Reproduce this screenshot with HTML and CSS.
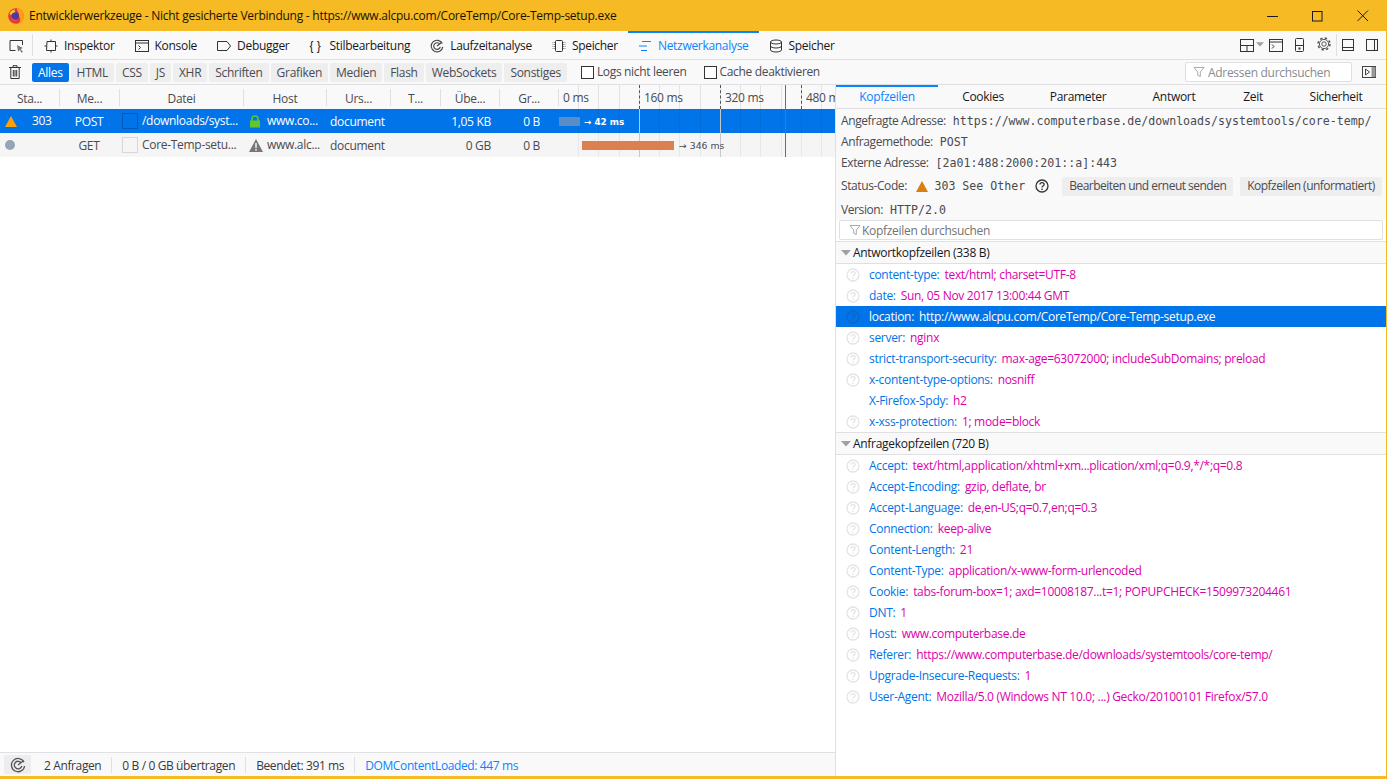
FILE: index.html
```html
<!DOCTYPE html>
<html lang="de">
<head>
<meta charset="utf-8">
<title>Entwicklerwerkzeuge</title>
<link rel="stylesheet" href="styles.css">
</head>
<body>
<svg class="defs" width="0" height="0">
  <symbol id="i-q" viewBox="0 0 14 14"><circle cx="7" cy="7" r="6" fill="none" stroke="currentColor" stroke-width="1.3"/><path d="M5 5.5C5 4.2 6 3.6 7 3.6S9.1 4.3 9.1 5.5C9.1 7 7 7 7 8.6" fill="none" stroke="currentColor" stroke-width="1.3"/><rect x="6.3" y="9.6" width="1.4" height="1.4" fill="currentColor"/></symbol>
  <symbol id="i-filter" viewBox="0 0 12 12"><path d="M1 1.5h10L7.3 6v4.5L4.7 9.3V6z" fill="none" stroke="#aaa" stroke-width="1"/></symbol>
  <symbol id="i-tri" viewBox="0 0 12 7"><path d="M0 0h12L6 6.5z" fill="#a0a0a0"/></symbol>
  <symbol id="i-perf" viewBox="0 0 16 16"><path d="M14 5.2A6.6 6.6 0 1 0 14.6 9M11.3 6A3.8 3.8 0 1 0 11.8 9M8 8l5.8-4.6" fill="none" stroke="currentColor" stroke-width="1.3"/></symbol>
</svg>
<div class="window">
  <header class="titlebar">
    <svg class="fx" width="16" height="16" viewBox="0 0 16 16"><circle cx="8" cy="8" r="7.800" fill="#e5333f"/><path d="M9 .3A7.800 7.800 0 0 1 15.300 11C14.500 13.500 12 15 10 15.500 12.500 13.500 13 10.500 11 8.500 10 6 11 4 9.500 3 9 2 8.800 1 9 .3z" fill="#ff9c1e"/><circle cx="7.300" cy="7.800" r="3.700" fill="#4b3aa6"/><path d="M1.500 5.500C2.500 3 5 1.500 7 1.500c-.6 1-.4 2 .5 2.700C5.500 4.300 3.500 5.500 3 7.500 2.500 7 2 6 1.500 5.500z" fill="#ffc22e"/><path d="M3.500 9.500c1 2.300 4 3.300 6.300 2-1 2-4.300 2.500-6 .5-.6-.7-.5-1.700-.3-2.500z" fill="#f5542b"/></svg>
    <span class="title">Entwicklerwerkzeuge - Nicht gesicherte Verbindung - https://www.alcpu.com/CoreTemp/Core-Temp-setup.exe</span>
    <div class="winbtns">
      <svg width="12" height="12" viewBox="0 0 12 12"><path d="M0 6.500h11" stroke="#1a1a1a" fill="none"/></svg>
      <svg width="12" height="12" viewBox="0 0 12 12"><rect x=".5" y="1.500" width="9.500" height="9.500" stroke="#1a1a1a" fill="none"/></svg>
      <svg width="12" height="12" viewBox="0 0 12 12"><path d="M.5 .5l10.500 10.500M11 .5L.5 11" stroke="#1a1a1a" fill="none"/></svg>
    </div>
  </header>

  <nav class="tabs">
    <div class="pick">
      <svg width="16" height="14" viewBox="0 0 16 14"><path d="M13.500 6V1.500H1V11.500H6.500" fill="none" stroke="#333"/><path d="M8 6l6 3-2.500 1L14 13l-1.500.8L10.800 11 9 12.500z" fill="#777"/></svg>
    </div>
    <a class="tab"><svg width="14" height="14" viewBox="0 0 14 14"><path d="M3 2.500h8.500v9H2.500z" fill="none" stroke="#333"/><path d="M7 .5v2M7 11.500v2M.5 7h2M11.500 7h2" stroke="#333"/></svg>Inspektor</a>
    <a class="tab"><svg width="14" height="14" viewBox="0 0 14 14"><rect x=".5" y="1.500" width="13" height="11" fill="none" stroke="#333"/><path d="M.5 4h13M3.500 6.500l2 2-2 2" fill="none" stroke="#333"/></svg>Konsole</a>
    <a class="tab"><svg width="14" height="14" viewBox="0 0 14 14"><path d="M.5 2.500h9.500l3.500 4.500-3.500 4.500H.5z" fill="none" stroke="#333" stroke-linejoin="round"/></svg>Debugger</a>
    <a class="tab"><span class="braces">{ }</span>Stilbearbeitung</a>
    <a class="tab"><svg class="dark" width="14" height="14"><use href="#i-perf"/></svg>Laufzeitanalyse</a>
    <a class="tab"><svg width="14" height="14" viewBox="0 0 14 14"><rect x="3.500" y="1.500" width="7" height="11" rx="1" fill="none" stroke="#333"/><path d="M1 3v8M2.500 3v8M11.500 3v8M13 3v8" stroke="#888" stroke-dasharray="1 1"/></svg>Speicher</a>
    <a class="tab active"><svg width="14" height="14" viewBox="0 0 14 14"><path d="M4 2.500h9M1 7h8M3 11.500h6" stroke="#0a84ff" fill="none"/></svg>Netzwerkanalyse</a>
    <a class="tab"><svg width="14" height="14" viewBox="0 0 14 14"><ellipse cx="7" cy="3" rx="5.500" ry="2" fill="none" stroke="#333"/><path d="M1.500 3v8c0 1 2.500 2 5.500 2s5.500-1 5.500-2V3M1.500 7c0 1 2.500 2 5.500 2s5.500-1 5.500-2" fill="none" stroke="#333"/></svg>Speicher</a>
    <div class="tabtools">
      <svg width="14" height="13" viewBox="0 0 14 13"><rect x=".5" y=".5" width="13" height="12" fill="none" stroke="#333"/><path d="M.5 6.500h13M7 6.500v6" stroke="#333"/></svg>
      <svg class="caret" width="8" height="5"><use href="#i-tri"/></svg>
      <svg class="t2" width="14" height="13" viewBox="0 0 14 13"><rect x=".5" y=".5" width="13" height="12" fill="none" stroke="#333"/><path d="M.5 3h13M3 5.500l2 2-2 2" fill="none" stroke="#333"/></svg>
      <svg class="t3" width="9" height="14" viewBox="0 0 9 14"><rect x=".5" y=".5" width="8" height="13" rx="1" fill="none" stroke="#333"/><path d="M.5 7.500h8"  stroke="#333"/><rect x="3.500" y="9.500" width="2" height="2" fill="#333"/></svg>
      <svg class="t4" width="14" height="14" viewBox="0 0 14 14"><circle cx="7" cy="7" r="2.200" fill="none" stroke="#555"/><circle cx="7" cy="7" r="4.600" fill="none" stroke="#555"/><circle cx="7" cy="7" r="6" fill="none" stroke="#555" stroke-width="1.500" stroke-dasharray="2.400 2.310"/></svg>
      <span class="vsep"></span>
      <svg width="12" height="12" viewBox="0 0 12 12"><rect x=".5" y=".5" width="11" height="11" fill="none" stroke="#333"/><path d="M.5 8.500h11" stroke="#333"/></svg>
      <svg class="t6" width="12" height="12" viewBox="0 0 12 12"><rect x=".5" y=".5" width="11" height="11" fill="none" stroke="#333"/><path d="M8.500 .5v11" stroke="#333"/></svg>
    </div>
  </nav>

  <div class="netbar">
    <svg class="trash" width="12" height="14" viewBox="0 0 12 14"><path d="M0 2.500h12M4 2.500V.7h4v1.800M1.800 2.500v11h8.400v-11M4.300 5v6.500M6 5v6.500M7.700 5v6.500" fill="none" stroke="#333"/></svg>
    <div class="filters">
      <button class="fbtn on">Alles</button>
      <button class="fbtn">HTML</button>
      <button class="fbtn">CSS</button>
      <button class="fbtn">JS</button>
      <button class="fbtn">XHR</button>
      <button class="fbtn">Schriften</button>
      <button class="fbtn">Grafiken</button>
      <button class="fbtn">Medien</button>
      <button class="fbtn">Flash</button>
      <button class="fbtn">WebSockets</button>
      <button class="fbtn">Sonstiges</button>
    </div>
    <label class="chk"><i></i>Logs nicht leeren</label>
    <label class="chk"><i></i>Cache deaktivieren</label>
    <div class="search"><svg width="12" height="12"><use href="#i-filter"/></svg><span class="search-text">Adressen durchsuchen</span></div>
    <svg class="sidebar-toggle" width="14" height="12" viewBox="0 0 14 12"><rect x=".5" y=".5" width="13" height="11" fill="none" stroke="#444"/><rect x="9.500" y="1" width="4" height="10" fill="#999"/><path d="M3.500 3v6l4-3z" fill="none" stroke="#444"/></svg>
  </div>

  <main class="panes">
    <section class="left">
      <div class="table">
        <div class="row head">
          <span class="c">Sta...</span><span class="c">Me...</span><span class="c">Datei</span><span class="c">Host</span><span class="c">Urs...</span><span class="c">T...</span><span class="c">Übe...</span><span class="c">Gr...</span>
          <span class="wf wfhead"><b>0 ms</b><b>160 ms</b><b>320 ms</b><b>480 ms</b></span>
        </div>
        <div class="row sel">
          <span class="d st"><svg width="12" height="11" viewBox="0 0 12 11"><path d="M6 0l6 11H0z" fill="#ff9f0a"/></svg><em>303</em></span>
          <span class="d ctr">POST</span>
          <span class="d file"><i class="thumb"></i>/downloads/syst...</span>
          <span class="d host"><svg width="12" height="13" viewBox="0 0 12 13"><path d="M3 6V4a3 3 0 0 1 6 0v2" fill="none" stroke="#62c52e" stroke-width="1.600"/><rect x="1" y="5.500" width="10" height="7" fill="#62c52e"/></svg>www.co...</span>
          <span class="d">document</span><span class="d"></span>
          <span class="d rt">1,05 KB</span><span class="d rt r2">0 B</span>
          <span class="wf"><i class="bar b1"></i><small class="lab l1">→ 42 ms</small></span>
        </div>
        <div class="row alt">
          <span class="d st"><i class="dot"></i></span>
          <span class="d ctr">GET</span>
          <span class="d file"><i class="thumb"></i>Core-Temp-setu...</span>
          <span class="d host"><svg class="warn" width="14" height="13" viewBox="0 0 14 13"><path d="M7 0l7 13H0z" fill="#777"/><path d="M6.300 4h1.400v5H6.300zM6.300 10h1.400v1.500H6.300z" fill="#fff"/></svg>www.alc...</span>
          <span class="d">document</span><span class="d"></span>
          <span class="d rt">0 GB</span><span class="d rt r2">0 B</span>
          <span class="wf"><i class="bar b2"></i><small class="lab l2">→ 346 ms</small></span>
        </div>
      </div>
      <footer class="status">
        <span class="perfbtn"><svg width="16" height="16"><use href="#i-perf"/></svg></span>
        <span class="si">2 Anfragen</span>
        <span class="si">0 B / 0 GB übertragen</span>
        <span class="si">Beendet: 391 ms</span>
        <span class="si blue">DOMContentLoaded: 447 ms</span>
      </footer>
    </section>

    <aside class="right">
      <div class="dtabs">
        <a class="dtab on">Kopfzeilen</a><a class="dtab">Cookies</a><a class="dtab">Parameter</a><a class="dtab">Antwort</a><a class="dtab">Zeit</a><a class="dtab">Sicherheit</a>
      </div>
      <div class="summary">
        <div class="sline"><span>Angefragte Adresse:</span><code>https://www.computerbase.de/downloads/systemtools/core-temp/</code></div>
        <div class="sline"><span>Anfragemethode:</span><code>POST</code></div>
        <div class="sline"><span>Externe Adresse:</span><code>[2a01:488:2000:201::a]:443</code></div>
        <div class="sline status-line"><span>Status-Code:</span>
          <svg width="12" height="11" viewBox="0 0 12 11"><path d="M6 0l6 11H0z" fill="#d97e0f"/></svg>
          <code>303 See Other</code>
          <svg class="help" width="14" height="14"><use href="#i-q"/></svg>
          <button class="gbtn g1">Bearbeiten und erneut senden</button><button class="gbtn">Kopfzeilen (unformatiert)</button>
        </div>
        <div class="sline"><span>Version:</span><code>HTTP/2.0</code></div>
      </div>
      <div class="hfilter"><svg width="12" height="12"><use href="#i-filter"/></svg>Kopfzeilen durchsuchen</div>

      <div class="section"><svg width="10" height="6"><use href="#i-tri"/></svg>Antwortkopfzeilen (338 B)</div>
      <ul class="hlist">
        <li><svg class="q" width="14" height="14"><use href="#i-q"/></svg><b>content-type:</b><s>text/html; charset=UTF-8</s></li>
        <li><svg class="q" width="14" height="14"><use href="#i-q"/></svg><b>date:</b><s>Sun, 05 Nov 2017 13:00:44 GMT</s></li>
        <li class="hsel"><svg class="q" width="14" height="14"><use href="#i-q"/></svg><b>location:</b><s>http://www.alcpu.com/CoreTemp/Core-Temp-setup.exe</s></li>
        <li><svg class="q" width="14" height="14"><use href="#i-q"/></svg><b>server:</b><s>nginx</s></li>
        <li><svg class="q" width="14" height="14"><use href="#i-q"/></svg><b>strict-transport-security:</b><s>max-age=63072000; includeSubDomains; preload</s></li>
        <li><svg class="q" width="14" height="14"><use href="#i-q"/></svg><b>x-content-type-options:</b><s>nosniff</s></li>
        <li><span class="q"></span><b>X-Firefox-Spdy:</b><s>h2</s></li>
        <li><svg class="q" width="14" height="14"><use href="#i-q"/></svg><b>x-xss-protection:</b><s>1; mode=block</s></li>
      </ul>
      <div class="section"><svg width="10" height="6"><use href="#i-tri"/></svg>Anfragekopfzeilen (720 B)</div>
      <ul class="hlist">
        <li><svg class="q" width="14" height="14"><use href="#i-q"/></svg><b>Accept:</b><s>text/html,application/xhtml+xm...plication/xml;q=0.9,*/*;q=0.8</s></li>
        <li><svg class="q" width="14" height="14"><use href="#i-q"/></svg><b>Accept-Encoding:</b><s>gzip, deflate, br</s></li>
        <li><svg class="q" width="14" height="14"><use href="#i-q"/></svg><b>Accept-Language:</b><s>de,en-US;q=0.7,en;q=0.3</s></li>
        <li><svg class="q" width="14" height="14"><use href="#i-q"/></svg><b>Connection:</b><s>keep-alive</s></li>
        <li><svg class="q" width="14" height="14"><use href="#i-q"/></svg><b>Content-Length:</b><s>21</s></li>
        <li><svg class="q" width="14" height="14"><use href="#i-q"/></svg><b>Content-Type:</b><s>application/x-www-form-urlencoded</s></li>
        <li><svg class="q" width="14" height="14"><use href="#i-q"/></svg><b>Cookie:</b><s>tabs-forum-box=1; axd=10008187...t=1; POPUPCHECK=1509973204461</s></li>
        <li><svg class="q" width="14" height="14"><use href="#i-q"/></svg><b>DNT:</b><s>1</s></li>
        <li><svg class="q" width="14" height="14"><use href="#i-q"/></svg><b>Host:</b><s>www.computerbase.de</s></li>
        <li><svg class="q" width="14" height="14"><use href="#i-q"/></svg><b>Referer:</b><s>https://www.computerbase.de/downloads/systemtools/core-temp/</s></li>
        <li><svg class="q" width="14" height="14"><use href="#i-q"/></svg><b>Upgrade-Insecure-Requests:</b><s>1</s></li>
        <li><svg class="q" width="14" height="14"><use href="#i-q"/></svg><b>User-Agent:</b><s>Mozilla/5.0 (Windows NT 10.0; ...) Gecko/20100101 Firefox/57.0</s></li>
      </ul>
    </aside>
  </main>
</div>
</body>
</html>
```

FILE: styles.css
```css
* { box-sizing: border-box; }
html, body { margin: 0; height: 100%; overflow: hidden; background: #fff; }
body { font: 12px/16px "Open Sans", "Noto Sans", sans-serif; letter-spacing: -0.3px; color: #38383d; }
.defs { position: absolute; }
svg { display: block; flex: none; }

.window { height: 779px; display: flex; flex-direction: column; border-right: 1px solid #f6bb24; border-bottom: 3px solid #f6bb24; }

.titlebar { height: 31px; flex: none; background: #f6bb24; display: flex; align-items: center; padding-left: 8px; color: #1a1200; margin-right: -1px; }
.title { margin-left: 5px; letter-spacing: -0.25px; }
.winbtns { margin-left: auto; display: flex; gap: 33px; margin-right: 18px; }

.tabs { height: 29px; flex: none; background: #f9f9fa; border-bottom: 1px solid #e0e0e2; display: flex; align-items: stretch; }
.pick { width: 33px; padding: 5px 0 0 9px; margin: 3px 1px 0 0; border-right: 1px solid #e0e0e2; height: 22px; }
.tab { display: flex; align-items: center; gap: 6px; padding: 0 10px; border-top: 2px solid transparent; color: #18181a; white-space: nowrap; }
.tab.active { border-top-color: #0a84ff; color: #0a84ff; }
.braces { width: 14px; font: 12px/14px "Liberation Sans", sans-serif; white-space: pre; letter-spacing: 0; }
.dark { color: #444; }
.tabtools { margin-left: auto; display: flex; align-items: center; padding-right: 8px; }
.caret { margin: 0 0 2px 2px; }
.t2 { margin-left: 5px; }
.t3 { margin-left: 12px; }
.t4 { margin: 0 0 3px 13px; }
.vsep { width: 1px; height: 22px; background: #e0e0e2; margin: 0 5px; }
.t6 { margin-left: 12px; }

.netbar { height: 25px; flex: none; background: #f9f9fa; border-bottom: 1px solid #e0e0e2; display: flex; align-items: center; }
.trash { margin-left: 9px; }
.filters { display: flex; gap: 2px; margin-left: 11px; }
.fbtn { font: inherit; letter-spacing: inherit; height: 19px; padding: 1px 6px 0; border: 0; border-radius: 2px; background: #eeeeef; color: #4a4a4f; }
.fbtn.on { background: #0074e8; color: #fff; }
.chk { display: flex; align-items: center; gap: 3px; color: #4a4a4f; margin-left: 14px; line-height: 18px; white-space: nowrap; letter-spacing: -0.33px; }
.chk + .chk { margin-left: 17px; }
.chk i { width: 13px; height: 13px; background: #fff; border: 1px solid #333; }
.search { margin-left: auto; width: 167px; height: 20px; background: #fff; border: 1px solid #e0e0e2; border-radius: 2px; display: flex; align-items: center; gap: 3px; padding-left: 7px; color: #8a8a8f; white-space: nowrap; }
.search-text { padding-top: 2px; }
.sidebar-toggle { margin: 0 10px; }

.panes { flex: 1; min-height: 0; display: flex; }
.left { width: 835px; flex: none; display: flex; flex-direction: column; }
.table { flex: 1; }
.row { height: 24px; display: grid; grid-template-columns: 60px 60px 124px 83px 64px 50px 59px 59px 1fr; align-items: center; }
.head { background: #f9f9fa; color: #4a4a4f; }
.c { text-align: center; height: 17px; line-height: 19px; border-right: 1px solid #e0e0e2; }
.d { padding-left: 3px; white-space: nowrap; height: 24px; line-height: 26px; overflow: hidden; }
.sel { background: #0074e8; color: #fff; }
.alt { background: #f5f5f5; color: #4a4a4f; }
.st { display: flex; align-items: center; padding-left: 5px; }
.st em { font-style: normal; margin-left: 15px; }
.dot { width: 10px; height: 10px; border-radius: 50%; background: #96a4b8; }
.ctr { text-align: center; padding: 0 2px 0 0; }
.file { display: flex; align-items: center; gap: 4px; padding-left: 2px; }
.thumb { width: 16px; height: 16px; flex: none; border: 1px solid #d7d7db; }
.sel .thumb { border-color: #005bb8; }
.host { display: flex; align-items: center; gap: 6px; padding-left: 5px; }
.warn { margin-right: -2px; }
.rt { text-align: right; padding: 0 9px 0 0; }
.r2 { padding: 0; margin-right: 19px; }

.wf { position: relative; align-self: stretch; height: 24px; overflow: hidden;
  background:
    linear-gradient(#0a84ff, #0a84ff) 226px 0 / 1px 100% no-repeat,
    linear-gradient(#c8c8cc, #c8c8cc) 80px 0 / 1px 100% no-repeat,
    linear-gradient(#c8c8cc, #c8c8cc) 161px 0 / 1px 100% no-repeat,
    repeating-linear-gradient(90deg, transparent 0 19.25px, rgba(0, 0, 0, .06) 19.25px 20.25px);
}
.wfhead { display: block; background:
    linear-gradient(#0a84ff, #0a84ff) 226px 0 / 1px 100% no-repeat,
    repeating-linear-gradient(90deg, transparent 0 19.25px, rgba(0, 0, 0, .09) 19.25px 20.25px); }
.wfhead b { position: absolute; top: 5px; font-weight: 400; white-space: nowrap; color: #4a4a4f; }
.wfhead b:nth-child(1) { left: 4px; }
.wfhead b:nth-child(2) { left: 85px; }
.wfhead b:nth-child(3) { left: 166px; }
.wfhead b:nth-child(4) { left: 247px; }
.wfhead b:nth-child(n+2)::before { content: ""; position: absolute; left: -5px; top: -5px; height: 24px; border-left: 1px dashed #555; }
.bar { position: absolute; height: 9px; top: 8px; }
.b1 { left: 0; width: 21px; background: #5a8cc7; }
.b2 { left: 23px; width: 92px; background: #dd8050; }
.lab { position: absolute; top: 5px; font: 9.300px/16px "DejaVu Sans", sans-serif; letter-spacing: 0; white-space: nowrap; }
.l1 { left: 25px; font-weight: 700; font-size: 8.800px; }
.l2 { left: 120px; }

.status { height: 24px; flex: none; background: #f9f9fa; border-top: 1px solid #e0e0e2; display: flex; align-items: center; padding-left: 4px; }
.perfbtn { width: 27px; height: 19px; background: #ededf0; border-radius: 2px; display: flex; align-items: center; justify-content: center; color: #555; margin-right: 3px; }
.si { padding: 0 10px; height: 16px; line-height: 18px; border-right: 1px solid #e0e0e2; white-space: nowrap; letter-spacing: -0.38px; }
.si.blue { border: 0; color: #0a84ff; }

.right { flex: 1; min-width: 0; border-left: 1px solid #e0e0e2; background: #fff; display: flex; flex-direction: column; }
.dtabs { height: 24px; flex: none; background: #f9f9fa; border-bottom: 1px solid #e0e0e2; display: grid; grid-template-columns: 102px 90px 100px 92px 66px 1fr; color: #18181a; }
.dtab { text-align: center; line-height: 20px; border-top: 2px solid transparent; }
.dtab.on { border-top-color: #0a84ff; color: #0a84ff; }
.summary { background: #f9f9fa; padding: 1px 0 0 5px; }
.sline { height: 21px; display: flex; align-items: center; gap: 7px; color: #4a4a4f; white-space: nowrap; letter-spacing: -0.4px; }
code { font: 11.600px/16px "DejaVu Sans Mono", monospace; letter-spacing: 0; color: #4a4a4f; }
.status-line { height: 26px; gap: 6px; }
.status-line span { margin-right: 3.500px; }
.help { margin-left: 4px; color: #333; }
.gbtn { font: inherit; letter-spacing: -0.52px; color: #4a4a4f; height: 19px; padding: 0 7px; border: 0; border-radius: 2px; background: #eeeeef; flex: none; }
.g1 { margin-left: 7px; }
.gbtn + .gbtn { margin-left: 1px; }
.hfilter { margin: 0 3px 1px; height: 20px; flex: none; background: #fff; border: 1px solid #e0e0e2; border-radius: 2px; display: flex; align-items: center; gap: 1px; padding-left: 9px; color: #737373; line-height: 19px; }
.section { height: 23px; flex: none; background: #f9f9fa; border-top: 1px solid #e0e0e2; border-bottom: 1px solid #e0e0e2; display: flex; align-items: center; gap: 2px; padding-left: 5px; color: #18181a; }
.hlist { list-style: none; margin: 0; padding: 0; }
.hlist li { height: 21px; display: flex; align-items: center; white-space: nowrap; color: #dd00a9; }
.hlist b { font-weight: 400; color: #0074e8; margin-right: 5px; }
.hlist s { text-decoration: none; }
.q { width: 14px; height: 14px; margin: 0 9px 0 10px; color: #e4e4e6; flex: none; }
.hsel { background: #0074e8; color: #fff !important; }
.hsel b { color: #fff; }
.hsel .q { color: #0a66c8; }
```
